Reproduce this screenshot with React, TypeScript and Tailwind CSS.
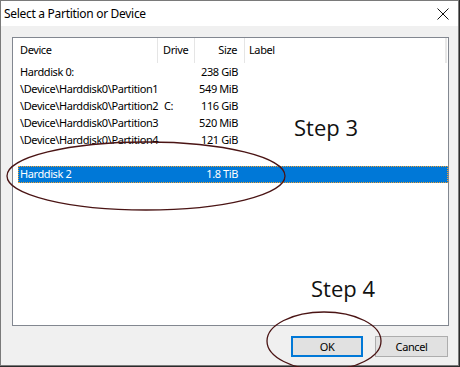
import React from "react";

type Row = { device: string; drive?: string; size?: string; selected?: boolean };

const rows: Row[] = [
  { device: "Harddisk 0:", size: "238 GiB" },
  { device: "\\Device\\Harddisk0\\Partition1", size: "549 MiB" },
  { device: "\\Device\\Harddisk0\\Partition2", drive: "C:", size: "116 GiB" },
  { device: "\\Device\\Harddisk0\\Partition3", size: "520 MiB" },
  { device: "\\Device\\Harddisk0\\Partition4", size: "121 GiB" },
  { device: "" },
  { device: "Harddisk 2", size: "1.8 TiB", selected: true },
];

export default function App() {
  return (
    <div
      className="relative w-[460px] h-[367px] bg-[#2b2b2b] overflow-hidden text-[11px] tracking-[-0.4px] text-black"
      style={{ fontFamily: '"Noto Sans", "Open Sans", sans-serif' }}
    >
      <div className="w-[459px] h-[366px] border border-[#7a7a7a] bg-[#f0f0f0] flex flex-col">
        {/* title bar */}
        <div className="h-[25px] bg-white flex items-center justify-between pl-[3px] pr-[8px]">
          <span className="text-[12px] tracking-[-0.3px]">Select a Partition or Device</span>
          <svg width="12" height="12" viewBox="0 0 12 12" className="mr-[1px]">
            <path d="M0.5 0.5 L11.5 11.5 M11.5 0.5 L0.5 11.5" stroke="#111" strokeWidth="1" />
          </svg>
        </div>

        {/* list */}
        <div className="mt-[11px] ml-[11px] mr-[9px] h-[289px] bg-white border border-[#828790] flex flex-col">
          <div className="flex h-[25px] items-center">
            <div className="w-[145px] h-full flex items-center pl-[7px] border-r border-[#e5e5e5]">Device</div>
            <div className="w-[37px] h-full flex items-center pl-[5px] border-r border-[#e5e5e5]">Drive</div>
            <div className="w-[50px] h-full flex items-center justify-end pr-[7px] border-r border-[#e5e5e5]">Size</div>
            <div className="flex-1 h-full flex items-center pl-[4px]">Label</div>
            <div className="w-[2px] h-full mr-[1px] bg-[#e8e8e8]" />
          </div>
          <div className="flex flex-col pt-[1px]">
            {rows.map((r, i) => (
              <div
                key={i}
                className={
                  "flex h-[17px] items-center ml-[5px] " +
                  (r.selected ? "bg-[#0078d7] text-white outline outline-1 outline-dotted outline-[#f0a030] -outline-offset-1" : "")
                }
              >
                <div className="w-[140px] pl-[2px] whitespace-nowrap">{r.device}</div>
                <div className="w-[37px] pl-[6px]">{r.drive}</div>
                <div className="w-[50px] text-right pr-[7px] whitespace-nowrap">{r.size}</div>
                <div className="flex-1" />
              </div>
            ))}
          </div>
        </div>

        {/* buttons */}
        <div className="flex justify-end gap-[12px] mt-[10px] mr-[10px]">
          <button className="w-[72px] h-[21px] bg-[#e1e1e1] border-2 border-[#0078d7] leading-none">
            OK
          </button>
          <button className="w-[73px] h-[21px] bg-[#e1e1e1] border border-[#adadad] leading-none">
            Cancel
          </button>
        </div>
      </div>

      {/* annotations */}
      <div className="absolute left-[294px] top-[116px] text-[22px] leading-none tracking-normal text-[#111]" style={{ fontFamily: '"Open Sans", "Noto Sans", sans-serif' }}>
        Step 3
      </div>
      <div className="absolute left-[311px] top-[277px] text-[22px] leading-none tracking-normal text-[#111]" style={{ fontFamily: '"Open Sans", "Noto Sans", sans-serif' }}>
        Step 4
      </div>
      <svg className="absolute left-0 top-0 pointer-events-none" width="460" height="367">
        <ellipse cx="146" cy="176" rx="139" ry="34" fill="none" stroke="#4a1414" strokeWidth="1.3" />
        <ellipse cx="324" cy="341" rx="57" ry="29" fill="none" stroke="#4a1414" strokeWidth="1.3" />
      </svg>
    </div>
  );
}
